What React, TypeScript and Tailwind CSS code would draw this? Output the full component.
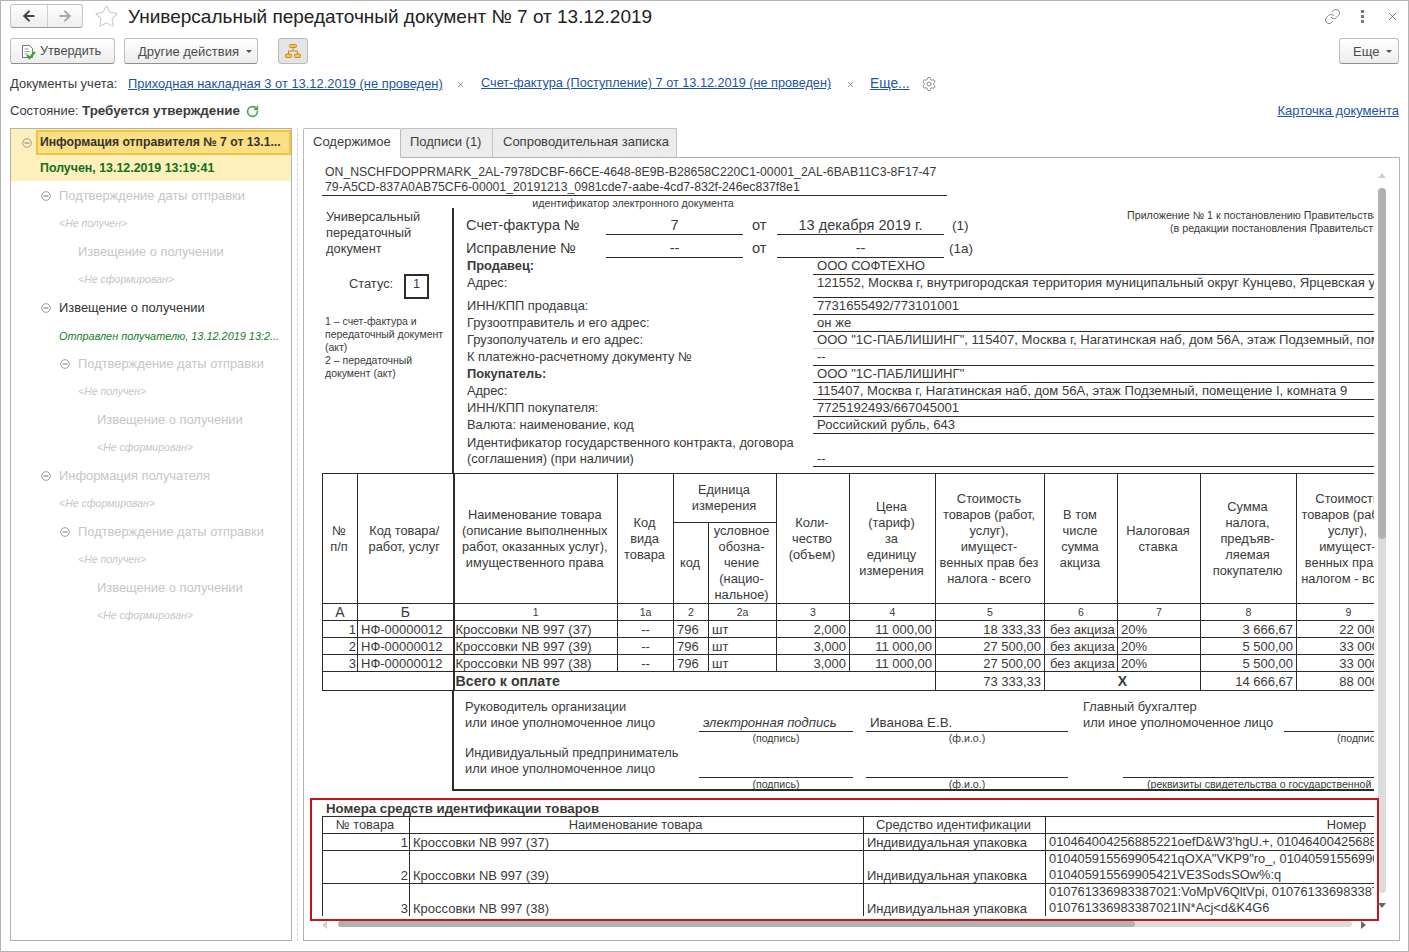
import React from "react";
import { ArrowLeft, ArrowRight, Link, RotateCw, Settings, Star, X } from "lucide-react";

const treeRows = [
  { toggle: 46, left: 59, text: "Подтверждение даты отправки", kind: "off" },
  { left: 59, text: "<Не получен>", kind: "note" },
  { left: 78, text: "Извещение о получении", kind: "off" },
  { left: 78, text: "<Не сформирован>", kind: "note" },
  { toggle: 46, left: 59, text: "Извещение о получении", kind: "on" },
  { left: 59, text: "Отправлен получателю, 13.12.2019 13:2...", kind: "sent" },
  { toggle: 65, left: 78, text: "Подтверждение даты отправки", kind: "off" },
  { left: 78, text: "<Не получен>", kind: "note" },
  { left: 97, text: "Извещение о получении", kind: "off" },
  { left: 97, text: "<Не сформирован>", kind: "note" },
  { toggle: 46, left: 59, text: "Информация получателя", kind: "off" },
  { left: 59, text: "<Не сформирован>", kind: "note" },
  { toggle: 65, left: 78, text: "Подтверждение даты отправки", kind: "off" },
  { left: 78, text: "<Не получен>", kind: "note" },
  { left: 97, text: "Извещение о получении", kind: "off" },
  { left: 97, text: "<Не сформирован>", kind: "note" },
];

const kindClass: Record<string, string> = {
  off: "text-[12.9px] text-[#c6c6c6]",
  on: "text-[12.9px] text-[#333]",
  note: "text-[10.5px] italic text-[#c6c6c6]",
  sent: "text-[10.9px] italic text-[#12801f]",
};

const formRows = [
  { label: "Продавец:", value: "ООО СОФТЕХНО", h: "h-[17px]", bold: true },
  { label: "Адрес:", value: "121552, Москва г, внутригородская территория муниципальный округ Кунцево, Ярцевская ул", h: "h-[23px]" },
  { label: "ИНН/КПП продавца:", value: "7731655492/773101001", h: "h-[17px]" },
  { label: "Грузоотправитель и его адрес:", value: "он же", h: "h-[17px]" },
  { label: "Грузополучатель и его адрес:", value: "ООО \"1С-ПАБЛИШИНГ\", 115407, Москва г, Нагатинская наб, дом 56А, этаж Подземный, пом", h: "h-[17px]", faint: true },
  { label: "К платежно-расчетному документу №", value: "--", h: "h-[17px]" },
  { label: "Покупатель:", value: "ООО \"1С-ПАБЛИШИНГ\"", h: "h-[17px]", bold: true },
  { label: "Адрес:", value: "115407, Москва г, Нагатинская наб, дом 56А, этаж Подземный, помещение I, комната 9", h: "h-[17px]" },
  { label: "ИНН/КПП покупателя:", value: "7725192493/667045001", h: "h-[17px]" },
  { label: "Валюта: наименование, код", value: "Российский рубль, 643", h: "h-[17px]" },
];

const goods = [
  { n: 1, name: "Кроссовки NB 997 (37)", qty: "2,000", cost: "18 333,33", tax: "3 666,67", total: "22 000,00" },
  { n: 2, name: "Кроссовки NB 997 (39)", qty: "3,000", cost: "27 500,00", tax: "5 500,00", total: "33 000,00" },
  { n: 3, name: "Кроссовки NB 997 (38)", qty: "3,000", cost: "27 500,00", tax: "5 500,00", total: "33 000,00" },
];

const widths = ["w-[35px]", "w-[96px]", "w-[164px]", "w-[56px]", "w-[35px]", "w-[68px]", "w-[73px]", "w-[86px]", "w-[109px]", "w-[73px]", "w-[83px]", "w-[96px]", "w-[104px]"];

const line = "border border-[#2b2b2b] p-0";
const cell = line + " align-middle";
const low = line + " align-bottom leading-[14px]";
const head = cell + " text-center text-[12.85px] leading-4 pr-[2px]";
const num = cell + " text-center text-[10.5px] leading-none";
const big = cell + " text-center text-[14px] leading-none";
const data = cell + " text-[13px] leading-none whitespace-nowrap pt-[1px]";

const Toggle = ({ className }: { className?: string }) => (
  <svg width="10" height="10" viewBox="0 0 10 10" className={className}>
    <circle cx="5" cy="5" r="4.3" fill="none" stroke="#9a9a9a" />
    <path d="M2.6 5h4.8" stroke="#777" />
  </svg>
);

const Caret = () => <span className="inline-block w-0 h-0 border-x-[3px] border-x-transparent border-t-[3px] border-t-[#555]" />;

const Btn = ({ className, children }: { className: string; children: React.ReactNode }) => (
  <div className={"h-[26px] pt-[1px] flex items-center rounded-[3px] border border-[#bdbdbd] border-b-[#8e8e8e] bg-gradient-to-b from-white to-[#ededed] text-[13px] text-[#4b4b4b] " + className}>
    {children}
  </div>
);

const Sign = ({ rightLine, rightGap, rightLabel }: { rightLine: string; rightGap: string; rightLabel?: React.ReactNode }) => (
  <>
    <div className="w-[154px] border-b border-[#2b2b2b] pl-[4px] text-[13px] italic flex items-end">
      {rightLabel ? "электронная подпись" : null}
    </div>
    <div className="w-[13px]" />
    <div className="w-[202px] border-b border-[#2b2b2b] pl-[4px] flex items-end text-[13.4px]">
      {rightLabel ? "Иванова Е.В." : null}
    </div>
    <div className={rightGap}>{rightLabel}</div>
    <div className={"border-b border-[#2b2b2b] " + rightLine} />
  </>
);

const SignCaption = ({ className, extra }: { className: string; extra: string }) => (
  <div className={"flex text-[10.6px] leading-[13px] whitespace-nowrap " + className}>
    <div className="w-[245px]" />
    <div className="w-[154px] text-center">(подпись)</div>
    <div className="w-[13px]" />
    <div className="w-[202px] text-center">(ф.и.о.)</div>
    <div className={extra.startsWith("(р") ? "ml-[79px]" : "ml-[269px]"}>{extra}</div>
  </div>
);

export default function App() {
  return (
    <div className="w-[1409px] h-[952px] border border-[#b4b4b4] bg-white overflow-hidden flex flex-col font-['Liberation_Sans',sans-serif] text-[#3c3c3c]">
      {/* title */}
      <div className="mt-[3px] h-[24px] flex items-center pl-[9px] pr-[9px]">
        <div className="w-[73px] h-[24px] flex rounded-[3px] border border-[#c4c4c4] border-b-[#9a9a9a] bg-gradient-to-b from-white to-[#ededed]">
          <div className="w-[37px] flex items-center justify-center border-r border-[#d0d0d0]"><ArrowLeft size={16} strokeWidth={3} color="#444" /></div>
          <div className="flex-1 flex items-center justify-center"><ArrowRight size={16} strokeWidth={3} color="#a8a8a8" /></div>
        </div>
        <Star size={25} strokeWidth={1} color="#c8c8c8" className="ml-[11px]" />
        <div className="ml-[9px] pt-[1px] text-[19px] leading-6 text-[#222]">Универсальный передаточный документ № 7 от 13.12.2019</div>
        <div className="ml-auto flex items-center">
          <Link size={17} strokeWidth={1.1} color="#666" />
          <div className="ml-[20px] flex flex-col gap-[2px]">
            <i className="block w-[3px] h-[3px] bg-[#777]" /><i className="block w-[3px] h-[3px] bg-[#777]" /><i className="block w-[3px] h-[3px] bg-[#777]" />
          </div>
          <X size={13} strokeWidth={1.4} color="#555" className="ml-[22px]" />
        </div>
      </div>
      {/* toolbar */}
      <div className="mt-[10px] h-[26px] flex items-center pl-[9px] pr-[9px]">
        <Btn className="w-[105px] pl-[9px]">
          <svg width="16" height="16" viewBox="0 0 16 16">
            <path d="M2.5 1.5h7l3 3v9h-10z" fill="#fff" stroke="#777" />
            <path d="M4.5 5h4M4.5 7.5h5M4.5 10h3" stroke="#999" />
            <path d="M7 11l2.5 3L15 8" fill="none" stroke="#3ea63a" strokeWidth="2.4" />
          </svg>
          <span className="ml-[4px] pt-[1px] text-[12.7px]">Утвердить</span>
        </Btn>
        <Btn className="ml-[9px] w-[134px] pl-[13px]">
          <span>Другие действия</span>
          <span className="ml-[7px] flex"><Caret /></span>
        </Btn>
        <div className="ml-[20px] w-[30px] h-[26px] rounded-[3px] border border-[#b9b9b9] bg-[#e4e4e4] flex items-center justify-center">
          <svg width="16" height="16" viewBox="0 0 16 16">
            <rect x="4.5" y="1.5" width="7" height="3" rx="1" fill="#f3c34b" stroke="#c98a12" />
            <rect x="0.5" y="11" width="6" height="3.5" rx="1" fill="#f3c34b" stroke="#c98a12" />
            <rect x="9.5" y="11" width="6" height="3.5" rx="1" fill="#f3c34b" stroke="#c98a12" />
            <path d="M8 4.5V8M3.5 11V8h9v3" fill="none" stroke="#c98a12" />
          </svg>
        </div>
        <Btn className="ml-auto w-[60px] pl-[13px]">
          <span>Еще</span>
          <span className="ml-[7px] flex"><Caret /></span>
        </Btn>
      </div>
      {/* linked documents */}
      <div className="mt-[11px] h-[18px] flex items-center pl-[9px] text-[13px] whitespace-nowrap">
        <span className="w-[118px]">Документы учета:</span>
        <span className="w-[315px] underline text-[#1d55a5] text-[12.9px]">Приходная накладная 3 от 13.12.2019 (не проведен)</span>
        <X size={9} strokeWidth={1.6} color="#555" className="ml-[13px]" />
        <span className="ml-[16px] w-[351px] underline text-[#1d55a5] text-[12.7px]">Счет-фактура (Поступление) 7 от 13.12.2019 (не проведен)</span>
        <X size={9} strokeWidth={1.6} color="#555" className="ml-[14px]" />
        <span className="ml-[15px] underline text-[#1d55a5] text-[13.8px]">Еще...</span>
        <Settings size={16} strokeWidth={1.5} color="#8a8a8a" className="ml-[11px]" />
      </div>
      {/* state */}
      <div className="mt-[9px] h-[18px] flex items-center pl-[9px] pr-[9px] text-[13px]">
        <span className="w-[72px]">Состояние:</span>
        <span className="font-bold text-[13.4px]">Требуется утверждение</span>
        <RotateCw size={13} strokeWidth={3} color="#46a64a" className="ml-[6px]" />
        <span className="ml-auto underline text-[#1d55a5]">Карточка документа</span>
      </div>
      {/* main */}
      <div className="mt-[8px] h-[813px] flex pl-[9px] pr-[8px]">
        <div className="w-[282px] h-full border border-[#b2b2b2]">
          <div className="h-[52px] bg-[#fdf0bd]">
            <div className="h-[27px] flex items-center pl-[11px]">
              <Toggle />
              <div className="ml-[4px] w-[255px] h-[25px] pl-[2px] flex items-center border-2 border-[#f2c53a] bg-[#fbdf82] text-[12.2px] font-bold text-[#333] whitespace-nowrap overflow-hidden">
                Информация отправителя № 7 от 13.1...
              </div>
            </div>
            <div className="h-[25px] pl-[29px] flex items-center text-[12.4px] font-bold text-[#12701c]">Получен, 13.12.2019 13:19:41</div>
          </div>
          <div className="pt-[1px]">
            {treeRows.map((r, i) => (
              <div key={i} className="relative h-[28px] flex items-center whitespace-nowrap">
                {r.toggle ? <Toggle className={r.toggle === 46 ? "ml-[30px]" : "ml-[49px]"} /> : null}
                <span className={kindClass[r.kind] + " " + (r.left === 59 ? (r.toggle ? "ml-[8px]" : "ml-[48px]") : r.left === 78 ? (r.toggle ? "ml-[8px]" : "ml-[67px]") : "ml-[86px]")}>{r.text}</span>
              </div>
            ))}
          </div>
        </div>
        <div className="w-[11px] flex justify-center"><div className="border-l border-dashed border-[#d4d4d4]" /></div>
        <div className="flex-1 min-w-0 flex flex-col">
          <div className="h-[30px] flex text-[13px] -mb-px">
            <div className="w-[98px] pl-[9px] pb-[2px] flex items-center border border-b-white border-[#bcbcbc] bg-white rounded-t-[2px] z-10">Содержимое</div>
            <div className="w-[92px] pl-[9px] pb-[2px] flex items-center border-y border-r border-[#c4c4c4] bg-[#ececec]">Подписи (1)</div>
            <div className="w-[184px] pl-[10px] pb-[2px] flex items-center border-y border-r border-[#c4c4c4] bg-[#ececec]">Сопроводительная записка</div>
          </div>
          <div className="relative flex-1 border border-[#b2b2b2]">
            <div className="ml-[11px] mt-[7px] w-[1059px] h-[751px] overflow-hidden">
              <div className="w-[1400px] pl-[7px] text-[12.85px] text-[#3a3a3a]">
                <div className="w-[622px] h-[30px] pl-[3px] border-b border-[#2b2b2b] leading-[15px] box-content text-[12.25px]">
                  <div className="whitespace-nowrap">ON_NSCHFDOPPRMARK_2AL-7978DCBF-66CE-4648-8E9B-B28658C220C1-00001_2AL-6BAB11C3-8F17-47</div>
                  <div className="whitespace-nowrap">79-A5CD-837A0AB75CF6-00001_20191213_0981cde7-aabe-4cd7-832f-246ec837f8e1</div>
                </div>
                <div className="w-[622px] h-[12px] text-center text-[10.7px] leading-[15px] whitespace-nowrap">идентификатор электронного документа</div>
                <div className="h-[265px] flex">
                  <div className="w-[130px] shrink-0 pl-[4px] pt-[1px] leading-4">
                    <div>Универсальный<br />передаточный<br />документ</div>
                    <div className="mt-[17px] pl-[23px] h-[25px] flex items-center">
                      <span className="w-[55px] pb-[6px]">Статус:</span>
                      <span className="w-[25px] h-[25px] border-2 border-[#2b2b2b] text-center leading-[16px]">1</span>
                    </div>
                    <div className="mt-[16px] -ml-[1px] text-[10.5px] leading-[13px] whitespace-nowrap">
                      1 – счет-фактура и<br />передаточный документ<br />(акт)<br />2 – передаточный<br />документ (акт)
                    </div>
                  </div>
                  <div className="w-[2px] shrink-0 bg-[#2b2b2b]" />
                  <div className="flex-1 min-w-0">
                    <div className="h-[50px] flex">
                      <div className="w-[530px] shrink-0 text-[14.6px] leading-[18px]">
                        <div className="h-[27px] flex items-end">
                          <span className="ml-[12px] w-[140px] shrink-0 pb-[1px]">Счет-фактура №</span>
                          <span className="w-[137px] shrink-0 border-b border-[#2b2b2b] text-center">7</span>
                          <span className="ml-[9px] w-[25px] shrink-0 pb-[1px]">от</span>
                          <span className="w-[167px] shrink-0 border-b border-[#2b2b2b] text-center">13 декабря 2019 г.</span>
                          <span className="ml-[8px] text-[13.5px]">(1)</span>
                        </div>
                        <div className="h-[23px] flex items-end">
                          <span className="ml-[12px] w-[140px] shrink-0 pb-[1px]">Исправление №</span>
                          <span className="w-[137px] shrink-0 border-b border-[#2b2b2b] text-center">--</span>
                          <span className="ml-[9px] w-[25px] shrink-0 pb-[1px]">от</span>
                          <span className="w-[167px] shrink-0 border-b border-[#2b2b2b] text-center">--</span>
                          <span className="ml-[5px] text-[13.5px]">(1а)</span>
                        </div>
                      </div>
                      <div className="ml-[143px] pt-[1px] text-[10.7px] leading-[13px] whitespace-nowrap">
                        <div>Приложение № 1 к постановлению Правительства</div>
                        <div className="pl-[43px]">(в редакции постановления Правительства</div>
                      </div>
                    </div>
                    {formRows.map((r, i) => (
                      <div key={i} className={"flex leading-4 " + r.h}>
                        <span className={"ml-[13px] w-[346px] shrink-0 " + (r.bold ? "font-bold" : "")}>{r.label}</span>
                        <span className={"w-[900px] pl-[4px] border-b whitespace-nowrap overflow-hidden text-[13.1px] " + (r.faint ? "border-[#d8d8d8]" : "border-[#2b2b2b]")}>{r.value}</span>
                      </div>
                    ))}
                    <div className="h-[33px] flex leading-4 pt-[1px]">
                      <span className="ml-[13px] w-[346px] shrink-0 whitespace-nowrap">Идентификатор государственного контракта, договора<br />(соглашения) (при наличии)</span>
                      <span className="w-[900px] pl-[4px] pt-[16px] border-b border-[#2b2b2b]">--</span>
                    </div>
                  </div>
                </div>
                <table className="table-fixed border-collapse w-[1078px]">
                  <colgroup>
                    {widths.map((c, i) => (
                      <col key={i} className={c} />
                    ))}
                  </colgroup>
                  <tbody>
                    <tr className="h-[49px]">
                      <td rowSpan={2} className={head}>№<br />п/п</td>
                      <td rowSpan={2} className={head}>Код товара/<br />работ, услуг</td>
                      <td rowSpan={2} className={head + " border-l-2"}>Наименование товара<br />(описание выполненных<br />работ, оказанных услуг),<br />имущественного права</td>
                      <td rowSpan={2} className={head}>Код<br />вида<br />товара</td>
                      <td colSpan={2} className={head}>Единица<br />измерения</td>
                      <td rowSpan={2} className={head}>Коли-<br />чество<br />(объем)</td>
                      <td rowSpan={2} className={head}>Цена<br />(тариф)<br />за<br />единицу<br />измерения</td>
                      <td rowSpan={2} className={head}>Стоимость<br />товаров (работ,<br />услуг),<br />имущест-<br />венных прав без<br />налога - всего</td>
                      <td rowSpan={2} className={head}>В том<br />числе<br />сумма<br />акциза</td>
                      <td rowSpan={2} className={head}>Налоговая<br />ставка</td>
                      <td rowSpan={2} className={head}>Сумма<br />налога,<br />предъяв-<br />ляемая<br />покупателю</td>
                      <td rowSpan={2} className={head}>Стоимость<br />товаров (работ,<br />услуг),<br />имущест-<br />венных прав с<br />налогом - всего</td>
                    </tr>
                    <tr className="h-[81px]">
                      <td className={head}>код</td>
                      <td className={head}>условное<br />обозна-<br />чение<br />(нацио-<br />нальное)</td>
                    </tr>
                    <tr className="h-[17px]">
                      <td className={big}>А</td>
                      <td className={big}>Б</td>
                      {["1", "1а", "2", "2а", "3", "4", "5", "6", "7", "8", "9"].map((s, i) => (
                        <td key={s} className={num + (i === 0 ? " border-l-2" : "")}>{s}</td>
                      ))}
                    </tr>
                    {goods.map((g) => (
                      <tr key={g.n} className="h-[17px]">
                        <td className={data + " text-right pr-[1px]"}>{g.n}</td>
                        <td className={data + " pl-[3px]"}>НФ-00000012</td>
                        <td className={data + " pl-[1px] border-l-2"}>{g.name}</td>
                        <td className={data + " text-center"}>--</td>
                        <td className={data + " pl-[3px]"}>796</td>
                        <td className={data + " pl-[3px]"}>шт</td>
                        <td className={data + " text-right pr-[3px]"}>{g.qty}</td>
                        <td className={data + " text-right pr-[3px]"}>11 000,00</td>
                        <td className={data + " text-right pr-[3px]"}>{g.cost}</td>
                        <td className={data + " pl-[5px]"}>без акциза</td>
                        <td className={data + " pl-[3px]"}>20%</td>
                        <td className={data + " text-right pr-[3px]"}>{g.tax}</td>
                        <td className={data + " text-right pr-[3px]"}>{g.total}</td>
                      </tr>
                    ))}
                    <tr className="h-[19px]">
                      <td colSpan={2} className={cell} />
                      <td colSpan={6} className={cell + " border-l-2 pl-[1px] text-[14.2px] leading-none font-bold"}>Всего к оплате</td>
                      <td className={data + " text-right pr-[3px]"}>73 333,33</td>
                      <td colSpan={2} className={cell + " text-center text-[14px] leading-none font-bold"}>Х</td>
                      <td className={data + " text-right pr-[3px]"}>14 666,67</td>
                      <td className={data + " text-right pr-[3px]"}>88 000,00</td>
                    </tr>
                  </tbody>
                </table>
                <div className="ml-[130px] h-[100px] border-l-2 border-b-2 border-[#2b2b2b] pt-[8px] leading-4">
                  <div className="flex h-[33px]">
                    <div className="w-[245px] pl-[11px]">Руководитель организации<br />или иное уполномоченное лицо</div>
                    <Sign rightGap="w-[216px] pl-[15px] whitespace-nowrap" rightLine="w-[200px]" rightLabel={<>Главный бухгалтер<br />или иное уполномоченное лицо</>} />
                  </div>
                  <SignCaption className="h-[13px]" extra="(подпись)" />
                  <div className="flex h-[33px]">
                    <div className="w-[245px] pl-[11px]">Индивидуальный предприниматель<br />или иное уполномоченное лицо</div>
                    <Sign rightGap="w-[55px]" rightLine="w-[360px]" />
                  </div>
                  <SignCaption className="h-[12px]" extra="(реквизиты свидетельства о государственной" />
                </div>
                <div className="mt-[10px] h-[15px] pl-[4px] text-[13.25px] leading-[15px] font-bold">Номера средств идентификации товаров</div>
                <table className="table-fixed border-collapse w-[1327px] text-[13px]">
                  <colgroup>
                    <col className="w-[87px]" /><col className="w-[454px]" /><col className="w-[182px]" /><col className="w-[604px]" />
                  </colgroup>
                  <tbody>
                    <tr className="h-[17px]">
                      <td className={head}>№ товара</td>
                      <td className={head}>Наименование товара</td>
                      <td className={head}>Средство идентификации</td>
                      <td className={head}>Номер</td>
                    </tr>
                    {[
                      { n: 1, name: "Кроссовки NB 997 (37)", h: "h-[17px]", codes: ["010464004256885221oefD&W3'hgU.+, 010464004256885221"] },
                      { n: 2, name: "Кроссовки NB 997 (39)", h: "h-[33px]", codes: ["010405915569905421qOXA\"VKP9\"ro_, 010405915569905421", "010405915569905421VE3SodsSOw%:q"] },
                      { n: 3, name: "Кроссовки NB 997 (38)", h: "h-[33px]", codes: ["010761336983387021:VoMpV6QltVpi, 010761336983387021", "010761336983387021IN*Acj<d&K4G6"] },
                    ].map((r) => (
                      <tr key={r.n} className={r.h}>
                        <td className={low + " text-right pr-[1px]"}>{r.n}</td>
                        <td className={low + " pl-[3px]"}>{r.name}</td>
                        <td className={low + " pl-[3px]"}>Индивидуальная упаковка</td>
                        <td className={low + " pl-[3px] whitespace-nowrap overflow-hidden text-[12.85px]"}>
                          {r.codes.map((c) => <div key={c} className="h-4 leading-4">{c}</div>)}
                        </td>
                      </tr>
                    ))}
                  </tbody>
                </table>
              </div>
            </div>
            {/* scrollbars */}
            <div className="absolute left-[1074px] top-[15px] w-0 h-0 border-x-[4px] border-x-transparent border-b-[5px] border-b-[#d0d0d0]" />
            <div className="absolute left-[1074px] top-[30px] w-[8px] h-[705px] rounded-[4px] bg-[#dcdcdc]">
              <div className="w-full h-[351px] rounded-[4px] bg-[#b0b0b0]" />
            </div>
            <div className="absolute left-[1074px] top-[745px] w-0 h-0 border-x-[4px] border-x-transparent border-t-[5px] border-t-[#666]" />
            <div className="absolute left-[18px] top-[763px] w-0 h-0 border-y-[4px] border-y-transparent border-r-[5px] border-r-[#d0d0d0]" />
            <div className="absolute left-[34px] top-[763px] w-[1014px] h-[6px] rounded-[3px] bg-[#dcdcdc]">
              <div className="w-[797px] h-full rounded-[3px] bg-[#b0b0b0]" />
            </div>
            <div className="absolute left-[1057px] top-[763px] w-0 h-0 border-y-[4px] border-y-transparent border-l-[5px] border-l-[#666]" />
            {/* highlight */}
            <div className="absolute left-[6px] top-[640px] w-[1069px] h-[123px] border-2 border-[#c4151f]" />
          </div>
        </div>
      </div>
    </div>
  );
}
